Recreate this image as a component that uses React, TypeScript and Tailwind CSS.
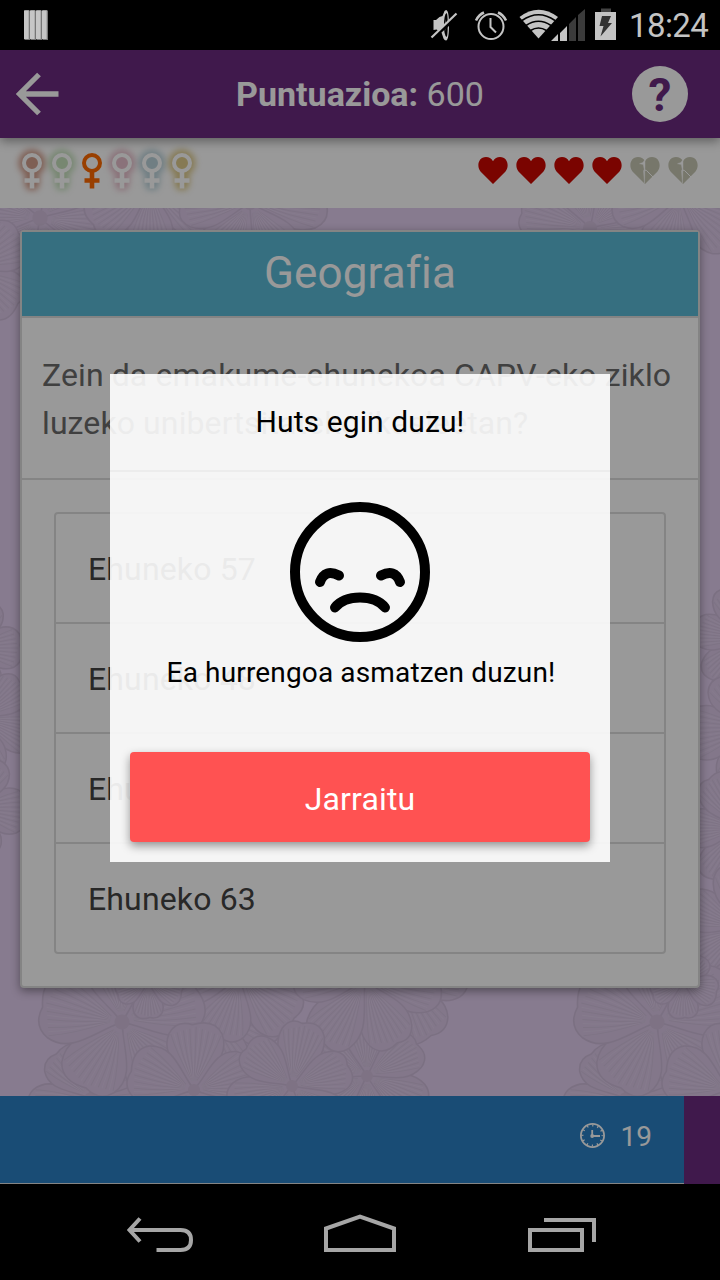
import React from "react";

const FONT = "font-['Roboto','Noto_Sans',sans-serif]";

type Flower = { x: number; y: number; r: number; petals: number; turn: number };

const FLOWERS: Flower[] = [
  { x: 90, y: 890, r: 62, petals: 5, turn: 20 },
  { x: 205, y: 800, r: 80, petals: 6, turn: 10 },
  { x: 240, y: 770, r: 70, petals: 5, turn: 40 },
  { x: 400, y: 770, r: 68, petals: 5, turn: 65 },
  { x: 122, y: 814, r: 84, petals: 5, turn: 50 },
  { x: 148, y: 775, r: 36, petals: 5, turn: 90 },
  { x: 367, y: 868, r: 66, petals: 6, turn: 30 },
  { x: 365, y: 773, r: 78, petals: 6, turn: 5 },
  { x: 194, y: 882, r: 68, petals: 5, turn: -88 },
  { x: 292, y: 878, r: 66, petals: 6, turn: -78 },
  { x: 40, y: 10, r: 85, petals: 6, turn: 12 },
  { x: -30, y: 60, r: 62, petals: 5, turn: 40 },
  { x: 150, y: -20, r: 70, petals: 6, turn: 30 },
  { x: 250, y: -5, r: 78, petals: 6, turn: 0 },
  { x: 590, y: 20, r: 78, petals: 6, turn: 15 },
  { x: 680, y: -10, r: 70, petals: 5, turn: 35 },
  { x: -28, y: 440, r: 50, petals: 5, turn: 0 },
  { x: -20, y: 510, r: 60, petals: 6, turn: 20 },
  { x: -28, y: 600, r: 55, petals: 5, turn: 5 },
  { x: 745, y: 430, r: 55, petals: 6, turn: 10 },
  { x: 750, y: 520, r: 65, petals: 5, turn: 30 },
  { x: 740, y: 620, r: 60, petals: 6, turn: 0 },
  { x: 740, y: 720, r: 65, petals: 6, turn: 25 },
  { x: 768, y: 780, r: 60, petals: 6, turn: 10 },
  { x: 625, y: 890, r: 62, petals: 5, turn: 20 },
  { x: 657, y: 814, r: 84, petals: 5, turn: 50 },
  { x: 683, y: 775, r: 36, petals: 5, turn: 90 },
  { x: 729, y: 882, r: 68, petals: 5, turn: -88 },
];

const VEINS = Array.from({ length: 17 }, (_, i) => (i - 8) * 0.038);

function FlowerShape({ x, y, r, petals, turn }: Flower) {
  const w = (r * 2.9) / petals;
  return (
    <g transform={`translate(${x} ${y})`}>
      {Array.from({ length: petals }, (_, i) => (
        <g key={i} transform={`rotate(${turn + (360 / petals) * i}) scale(${i % 2 ? 0.93 : 1})`}>
          <path
            d={`M0 0 C${r * 0.3} ${-w * 0.35} ${r * 0.5} ${-w * 0.9} ${r * 0.82} ${-w * 0.68} Q${r * 1.02} ${-w * 0.5} ${r * 0.96} ${-w * 0.1} Q${r * 1.06} ${w * 0.45} ${r * 0.84} ${w * 0.66} C${r * 0.5} ${w * 0.9} ${r * 0.3} ${w * 0.35} 0 0Z`}
            fill="#dac7e6"
            stroke="#cebbd9"
            strokeWidth="1.6"
          />
          {VEINS.map((v, n) => (
            <path
              key={n}
              d={`M${r * 0.14} ${v * r * 0.12} Q${r * 0.5} ${v * w * 1.5} ${r * (0.93 - Math.abs(v) * 0.4)} ${v * w * 2.1}`}
              fill="none"
              stroke={n % 2 === 0 ? "#d2c0dd" : "#dfcdea"}
              strokeWidth="1"
            />
          ))}
        </g>
      ))}
      <circle r={r * 0.09} fill="#d2bfdc" />
    </g>
  );
}

function StatusBar() {
  return (
    <div className="flex h-[50px] shrink-0 items-center bg-black">
      <svg width="26" height="50" viewBox="23 0 26 50" className="ml-[23px]">
        {[24, 30, 36, 42].map((x) => (
          <g key={x}>
            <path d={`M${x} 11l1-1h4l1 1v29h-5l-1-1z`} fill="#777" />
            <path d={`M${x} 10.500h4.700v28.500h-4.700z`} fill="#c6c6c6" />
          </g>
        ))}
      </svg>
      <svg width="190" height="50" viewBox="429 0 190 50" className="ml-auto mr-[10px]" fill="#c4c4c4">
        <path d="M433.500 20h2.500l3.500-3 3-1 2-5 1.500-1q3 0 3 15t-3 15.500q-1.500 0-2.500-2l-2-6-5-3-3 .500z" />
        <path d="M446.500 13q1.200 0 1.200 12t-1.200 12q-2.500-2-2.500-12t2.500-12" fill="#000" />
        <path d="M445.500 19q1.500 6 0 12z" />
        <path d="M430.500 40L458.500 15.500" stroke="#000" strokeWidth="3" />
        <path d="M431.500 37.500L456.500 13.500" stroke="#c4c4c4" strokeWidth="2.200" />
        <g fill="none" stroke="#c4c4c4" strokeWidth="2">
          <circle cx="491" cy="26.500" r="12.500" />
          <path d="M490.500 18v9l5.500 5.500" />
          <path d="M476 20.500q3-6 8-8M506 20.500q-3-6-8-8" strokeWidth="2.600" />
        </g>
        <path d="M519.500 17Q538.500 2.500 558 17L538.500 38.500Z" />
        <g fill="none" stroke="#000" strokeWidth="1.600">
          <path d="M522 20.500q16.500-11.500 33 0" />
          <path d="M526 25.500q12.500-8.500 25 0" />
          <path d="M530.500 30.500q8-5 16 0" />
        </g>
        <path d="M551 41l7-7v7zM560 41v-8l7-7v15z" />
        <path d="M569 41v-17l7-7v24zM578 41v-26l7-6v32z" fill="#3b3b3b" />
        <path d="M601 8.500h10v4h-10z" fill="#444" />
        <path d="M595 12h21v28h-21z" />
        <path d="M602 16h9l-3 7h4l-11.500 13.500 3-10.500h-4z" fill="#333" />
      </svg>
      <span className="mr-[12px] w-[79px] text-[33px] leading-none tracking-[-0.6px] text-[#c4c4c4]">18:24</span>
    </div>
  );
}

function Header() {
  return (
    <header className="relative z-10 flex h-[88px] shrink-0 items-center bg-[#6b2b7f] pl-4 pr-8 text-white shadow-[0_3px_10px_rgba(0,0,0,0.4)]">
      <svg width="56" height="50" viewBox="16.5 69 56 50" fill="none" stroke="white" strokeWidth="5.300">
        <path d="M39.500 74.500L20 94l19.500 19.500M20 94h39" />
      </svg>
      <h1 className="flex-1 pl-4 text-center text-[34px] leading-none">
        <b className="font-bold">Puntuazioa:</b> 600
      </h1>
      <div className="flex size-14 items-center justify-center rounded-full bg-white pt-[2px] text-[46px] leading-none font-bold text-[#6b2b7f]">
        ?
      </div>
    </header>
  );
}

const CATEGORIES = [
  { color: "#a8401c", glow: true },
  { color: "#8fc47d", glow: true },
  { color: "#ff6a00", glow: false },
  { color: "#d08098", glow: true },
  { color: "#79a8b8", glow: true },
  { color: "#c09a1c", glow: true },
];

function FemaleSign({ color, glow }: { color: string; glow: boolean }) {
  return (
    <svg
      width="30"
      height="40"
      viewBox="0 0 30 40"
      className="overflow-visible"
      fill="none"
      stroke={glow ? "white" : color}
      strokeWidth="4"
    >
      {glow && (
        <g opacity=".5">
          <g stroke={color} strokeWidth="11" className="blur-[3px]">
            <circle cx="15" cy="11" r="8" fill={color} />
            <path d="M15 19v19M7.500 28.500h15" />
          </g>
        </g>
      )}
      <circle cx="15" cy="11" r="8" />
      <path d="M15 19v17.500M7.500 28.500h15" strokeWidth="4.600" />
    </svg>
  );
}

function Heart({ broken }: { broken: boolean }) {
  return (
    <svg width="30" height="27" viewBox="0 0 30 27" fill={broken ? "#c7c7b3" : "#cc0800"}>
      <path d="M15 27L2.500 14.500C-1.500 10 0 0 8 0q4.500 0 7 4.200Q17.500 0 22 0c8 0 9.500 10 5.500 14.500Z" />
      {broken && (
        <g fill="white" stroke="white">
          <path d="M15 2.500l-2.200 3-3.300 1.200 3.800.800.900 4.800-.700 1.700 1 12.500.300-12.500.200-4z" strokeWidth=".400" />
          <path d="M14.500 13l2 .500 6.500 6.500" fill="none" strokeWidth="1" />
        </g>
      )}
    </svg>
  );
}

function Progress() {
  return (
    <div className="flex h-[70px] shrink-0 items-start justify-between bg-white pt-[14px] pl-[17px] pr-[22px]">
      <div className="flex">
        {CATEGORIES.map((c) => (
          <FemaleSign key={c.color} {...c} />
        ))}
      </div>
      <div className="flex gap-2 pt-[5px]">
        {[false, false, false, false, true, true].map((b, i) => (
          <Heart key={i} broken={b} />
        ))}
      </div>
    </div>
  );
}

function Question() {
  const answers = ["Ehuneko 57", "Ehuneko 48", "Ehuneko 45", "Ehuneko 63"];
  return (
    <section className="relative rounded border-2 border-[#ddd] bg-white shadow-[0_3px_10px_rgba(0,0,0,0.4)]">
      <h2 className="h-[86px] border-b-2 border-[#ddd] bg-[#5bb9d5] text-center text-[44px] leading-[83px] tracking-[0.1px] text-white">
        Geografia
      </h2>
      <p className="h-[162px] border-b-2 border-[#ddd] px-5 pt-[33px] text-[32px] leading-[48px] tracking-[0.1px] whitespace-nowrap text-[#6b6b6b]">
        Zein da emakume-ehunekoa CAPV-eko ziklo
        <br />
        luzeko unibertsitateko ikasleetan?
      </p>
      <div className="p-8">
        <ul className="rounded border-2 border-[#ddd] text-[32px] leading-[110px] tracking-[0.15px] text-[#444]">
          {answers.map((a) => (
            <li key={a} className="h-[110px] border-b-2 border-[#ddd] px-8 last:h-[108px] last:border-b-0">
              {a}
            </li>
          ))}
        </ul>
      </div>
    </section>
  );
}

function Timer() {
  return (
    <footer className="flex h-[88px] shrink-0 bg-[#6b2b7f]">
      <div className="flex w-[684px] items-center justify-end border-b border-[#ddd] bg-[#2b7fc3] pr-8 pb-[7px] text-white">
        <svg width="26" height="26" viewBox="0 0 26 26" fill="none" stroke="white" strokeWidth="1.800" className="mr-[15px]">
          <circle cx="12.500" cy="12.500" r="11.600" />
          <circle cx="12.500" cy="12.500" r="10" strokeWidth="2" strokeDasharray="1.200 4.036" strokeDashoffset=".600" />
          <path d="M12.200 7V13H20" strokeWidth="1.800" />
          <circle cx="12.200" cy="13" r="1" fill="white" />
        </svg>
        <span className="pt-px text-[28px] leading-none">19</span>
      </div>
    </footer>
  );
}

function Dialog() {
  return (
    <div className="flex h-[488px] w-[500px] flex-col bg-white/90 text-black">
      <h3 className="h-[98px] shrink-0 border-b-2 border-black/[0.035] text-center text-[30px] leading-[95px] tracking-[0.1px]">
        Huts egin duzu!
      </h3>
      <svg
        width="140"
        height="140"
        viewBox="290 502 140 140"
        fill="none"
        stroke="black"
        strokeWidth="10"
        strokeLinecap="round"
        className="mt-[30px] self-center"
      >
        <circle cx="360" cy="572" r="65" />
        <path d="M320 582C323.500 572.500 330 571 339 575.500M400 582C396.500 572.500 390 571 381 575.500" />
        <path d="M335 607.500Q343 597.500 360 597.500T385 607.500" />
      </svg>
      <p className="mt-[15px] pl-[2px] text-center text-[28px] leading-8 tracking-[0.15px]">Ea hurrengoa asmatzen duzun!</p>
      <button className="mx-5 mt-auto mb-5 h-[90px] rounded bg-[#ff5252] pt-1 text-[32px] leading-none tracking-[0.15px] text-white shadow-[0_4px_10px_rgba(0,0,0,0.4)]">
        Jarraitu
      </button>
    </div>
  );
}

function NavBar() {
  return (
    <nav className="flex h-24 shrink-0 items-center justify-between bg-black px-[124px]">
      <svg width="72" height="96" viewBox="124.500 1184 72 96" fill="none" stroke="#a6a6a6" strokeWidth="4">
        <path d="M140.500 1218.500L130 1230l10.500 11.500M130 1230h51q10.500 0 10.500 10t-10.500 10h-24" />
      </svg>
      <svg width="72" height="96" viewBox="324 1184 72 96" fill="none" stroke="#a6a6a6" strokeWidth="4">
        <path d="M326 1250v-21.500l34-12 34 12v21.500z" />
      </svg>
      <svg width="72" height="96" viewBox="524 1184 72 96" fill="none" stroke="#a6a6a6" strokeWidth="4">
        <path d="M530 1230h52v20h-52zM544 1220h50v22" />
      </svg>
    </nav>
  );
}

export default function App() {
  return (
    <div className={`flex h-[1280px] w-[720px] flex-col overflow-hidden bg-black ${FONT}`}>
      <StatusBar />
      <div className="relative flex flex-1 flex-col">
        <Header />
        <Progress />
        <main className="relative flex-1 overflow-hidden bg-[#e1cdee] px-5 pt-[22px]">
          <svg className="absolute inset-0" width="720" height="888" viewBox="0 0 720 888">
            {FLOWERS.map((f, i) => (
              <FlowerShape key={i} {...f} />
            ))}
          </svg>
          <Question />
        </main>
        <Timer />
        <div className="absolute inset-0 z-20 flex items-center justify-center bg-black/40 pt-[2px]">
          <Dialog />
        </div>
      </div>
      <NavBar />
    </div>
  );
}
